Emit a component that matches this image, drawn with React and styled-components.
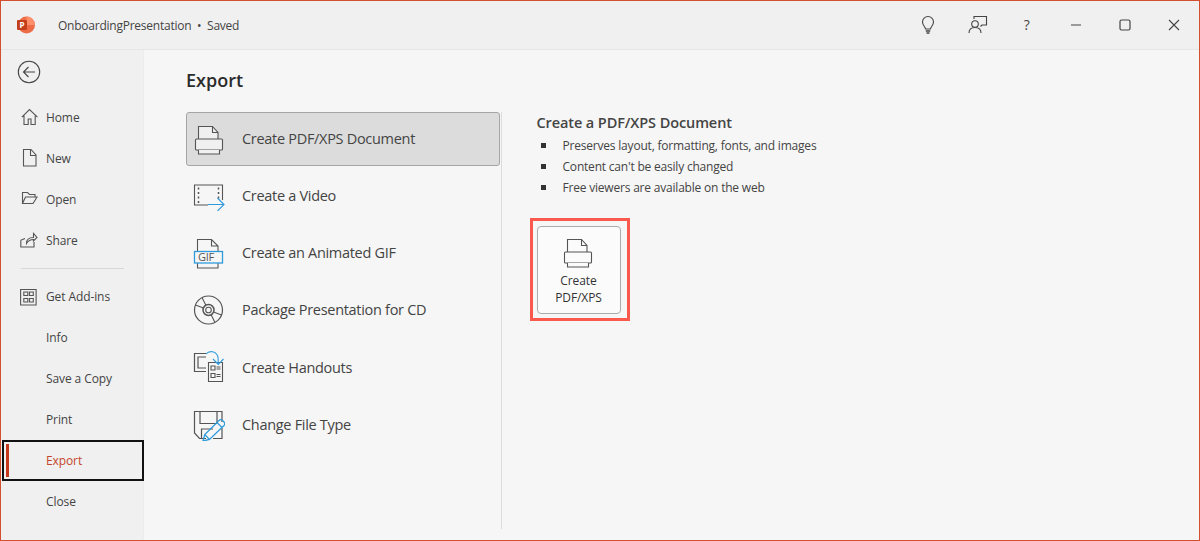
import React from "react";
import styled, { createGlobalStyle } from "styled-components";

const Global = createGlobalStyle`
  html, body { margin: 0; padding: 0; background: #f0f0f0; }
  * { box-sizing: border-box; }
`;
const Win = styled.div`
  width: 1200px; height: 541px; display: flex; flex-direction: column; overflow: hidden;
  border: 1px solid #d2502f; border-top-width: 1.5px;
  background: #f0f0f0; color: #444;
  font-family: "Open Sans", "Noto Sans", sans-serif;
`;
const TitleBar = styled.header`
  height: 48.5px; flex: none; display: flex; align-items: center; padding: 0 0 0 16px;
  border-bottom: 1px solid #e6e6e6;
`;
const AppLogo = styled.svg`width: 18px; height: 18px; flex: none;`;
const DocTitle = styled.div`
  margin-left: 23px; flex: 1; font-size: 12px; letter-spacing: -0.24px; color: #444; padding-top: 2px;
`;
const TitleIcons = styled.div`display: flex; align-items: center;`;
const TitleBtn = styled.div`
  width: 49.2px; height: 48px; display: flex; align-items: center; justify-content: center; color: #444;
  font-size: 14px;
`;
const Body = styled.div`flex: 1; display: flex; min-height: 0;`;
const Sidebar = styled.nav`
  width: 143px; flex: none; display: flex; flex-direction: column; border-right: 1px solid #ececec; padding-top: 9.5px;
`;
const Back = styled.div`
  height: 26px; margin-bottom: 11.5px; padding-left: 16px; display: flex; align-items: center;
`;
const NavItem = styled.div`
  position: relative; height: 41px; display: flex; align-items: center; padding-left: 44px;
  font-size: 12px; letter-spacing: -0.1px; color: ${p => (p.$active ? "#c4462a" : "#444")};
  margin-left: 1px;
  ${p => p.$active && `
    border: 2px solid #111; padding-left: 42px; width: 141.5px;
    &::before { content: ""; position: absolute; left: 2px; top: 2px; bottom: 2px; width: 2.5px; background: #c4381c; }
  `}
`;
const NavIcon = styled.svg`
  position: absolute; left: 18px; top: 50%; transform: translateY(-50%); width: 20px; height: 20px;
  fill: none; stroke: #555; stroke-width: 1.1;
`;
const Divider = styled.hr`
  border: 0; height: 1px; background: #d8d8d8; margin: 7px 18px 7.5px 20px; flex: none; width: 103px;
`;
const Main = styled.main`
  flex: 1; background: #f6f6f6; padding: 18px 0 11px 42px; display: flex; flex-direction: column; min-width: 0;
`;
const Heading = styled.h1`
  margin: 0 0 20px; font-size: 18px; line-height: 24px; font-weight: 600; color: #2b2b2b;
`;
const Columns = styled.div`flex: 1; display: flex; min-height: 0;`;
const List = styled.div`
  width: 315.5px; flex: none; border-right: 1px solid #dcdcdc; padding-right: 0.5px;
  display: flex; flex-direction: column;
`;
const ListItem = styled.div`
  height: ${p => (p.$selected ? "54.5px" : "57.4px")}; display: flex; align-items: center;
  margin-bottom: ${p => (p.$selected ? "0.5px" : "0")};
  padding-left: 56px; position: relative; width: 314px;
  font-size: 14.5px; letter-spacing: -0.3px; color: #444;
  ${p => p.$selected && `background: #dcdcdc; border: 1px solid #a6a6a6; border-radius: 3px; padding-left: 55px;`}
`;
const ListIcon = styled.svg`
  position: absolute; left: 7px; top: 50%; transform: translateY(-50%); width: 32px; height: 32px;
  fill: none; stroke: #555; stroke-width: 1.1;
`;
const Detail = styled.section`padding: 1px 0 0 35px; flex: 1;`;
const DetailTitle = styled.h2`
  margin: 0 0 2px; font-size: 14.5px; line-height: 20px; font-weight: 600; color: #444; letter-spacing: -0.1px;
`;
const Bullets = styled.ul`margin: 0 0 20px; padding: 0; list-style: none;`;
const Bullet = styled.li`
  height: 21px; display: flex; align-items: center; font-size: 12px; letter-spacing: -0.2px; color: #444;
  &::before { content: ""; width: 5px; height: 5px; background: #333; margin: 0 17px 0 4px; flex: none; }
`;
const Highlight = styled.div`
  display: inline-flex; margin-left: -7px; padding: 5px 6px 4px 4px; border: 3px solid #fa5a4e;
`;
const CreateBtn = styled.div`
  width: 84px; height: 88px; background: #fbfbfb; border: 1px solid #ababab; border-radius: 4px;
  display: flex; flex-direction: column; align-items: center; padding-top: 9px;
  font-size: 12px; line-height: 17px; letter-spacing: -0.1px; text-align: center; color: #333;
  svg { width: 32px; height: 32px; fill: none; stroke: #555; stroke-width: 1.1; margin-bottom: 4px; flex: none; }
`;

const Blue = "#2f9bdc";
const Printer = ({ fill }) => (
  <>
    <path d="M4.500 16V3.500h14l5.500 6V16" fill={fill} />
    <path d="M18.500 3.500v6H24" />
    <path d="M2.500 16h25a1 1 0 0 1 1 1v9a1 1 0 0 1-1 1h-25a1 1 0 0 1-1-1v-9a1 1 0 0 1 1-1z" fill={fill} />
    <path d="M4.500 27v4h21v-4" fill={fill} />
  </>
);
const navIcons = {
  home: <path d="M1.800 10.200 9.500 2.500l8 7.700M4 8.500v9h4.200V12h2.800v5.500h4.200v-9" />,
  new: <path d="M3.500 1.500H11l5 5.500v11H3.500zM10.500 1.500v6H16" />,
  open: <path d="M2.500 14.500v-11h5l2 2h5.500v2.500M2.500 14.500H13l4-6.500H5.500z" />,
  share: <path d="M.8 10.200V17H14v-5M.8 10.200 5 8.500M6.500 13.500c0-4 3-6 7-6V3.500l3.500 4-3.500 3.500V9.500c-3 0-5.500 1.500-7 4z" />,
  addins: <path d="M.6 2.500h15.500v15.500H.6zM3.800 5h4v3.500h-4zM9.500 5h3.800v3.500H9.500zM3.800 11.500h4V15h-4zM9.500 11.500h3.800V15H9.500z" />,
};
const nav = [
  ["Home", "home"], ["New", "new"], ["Open", "open"], ["Share", "share"], null,
  ["Get Add-ins", "addins"], ["Info"], ["Save a Copy"], ["Print"], ["Export", null, true], ["Close"],
];
const listIcons = [
  <Printer key="p" fill="#f0f0f0" />,
  <g key="v">
    <path d="M15 26H1.500V6h28v15" />
    <path d="M5.500 8.500v2M5.500 13v2M5.500 17.500v2M5.500 22v2M25.500 8.500v2M25.500 13v2M25.500 17.500v2" strokeWidth="1.500" />
    <path d="M15 25.500h16M24.500 19l6.500 6.500-6.500 6.500" stroke={Blue} />
  </g>,
  <g key="g">
    <path d="M4.500 14.500v-12h14L25 9v5.500M18.500 2.500V9H25M4.500 26v5h20.500v-5" />
    <rect x="1.500" y="14.500" width="28" height="11.500" stroke={Blue} strokeWidth="1.300" />
    <text x="5" y="24.200" fontSize="11" fontFamily="Open Sans" fill="#555" stroke="none">GIF</text>
  </g>,
  <g key="c">
    <circle cx="15.500" cy="16" r="14" strokeWidth="1.200" />
    <circle cx="15.500" cy="16" r="5.500" strokeWidth="1.500" />
    <circle cx="15.500" cy="16" r="2.800" />
    <path d="M2.500 11l8 3M9 3.500l4 8M28.500 21l-8-3M22 28.500l-4-8" />
  </g>,
  <g key="h">
    <path d="M13 20.500H1.500v-18h12M13 17H5V6h8" strokeWidth="1.200" />
    <path d="M15.500 11.500h14v19h-14z" />
    <path d="M18 15h4v4h-4zM18 22.500h4v4h-4zM23.500 16h4M23.500 18h4M23.500 23.500h4M23.500 25.500h4" />
    <path d="M13 3c3-3.500 10-3.500 12 3l.3 7M20 8l5.300 5.500L30.500 8" stroke={Blue} />
  </g>,
  <g key="f">
    <path d="M29 13V2.500H1.500V24l5 5.500H13M7 2.500v12h17v-12M8.500 29.500V20H20M29 19v10.500h-9" strokeWidth="1.200" />
    <path d="M10 32l1.800-6.500L26 11.500a2.500 2.500 0 0 1 3.500 0l1.500 1.500a2.500 2.500 0 0 1 0 3.500L16.500 30.500z" stroke={Blue} strokeWidth="1.300" />
    <path d="M11.800 25.500l4.700 5M24 13.500l5 5" stroke={Blue} />
  </g>,
];
const listLabels = ["Create PDF/XPS Document", "Create a Video", "Create an Animated GIF", "Package Presentation for CD", "Create Handouts", "Change File Type"];

export default function App() {
  return (
    <Win>
      <Global />
      <TitleBar>
        <AppLogo viewBox="0 0 18 18">
          <circle cx="9.500" cy="9" r="8.500" fill="#ed6c47" />
          <path d="M9.500.5a8.500 8.500 0 0 1 8.500 8.500H9.500z" fill="#ff8f6b" />
          <rect x="0" y="4" width="10" height="10" rx="1" fill="#c43e1c" />
          <text x="2.600" y="12" fontSize="8" fontWeight="700" fontFamily="Open Sans" fill="#fff">P</text>
        </AppLogo>
        <DocTitle>OnboardingPresentation&nbsp; •&nbsp; Saved</DocTitle>
        <TitleIcons>
          <TitleBtn>
            <svg width="18" height="20" viewBox="0 0 18 20" fill="none" stroke="#444" strokeWidth="1.100">
              <path d="M6.500 14c0-2-3-3.500-3-7a5.500 5.500 0 0 1 11 0c0 3.500-3 5-3 7z" />
              <path d="M6.800 16h4.400M7.500 18h3" strokeWidth="1.300" />
            </svg>
          </TitleBtn>
          <TitleBtn>
            <svg width="20" height="20" viewBox="0 0 20 20" fill="none" stroke="#444" strokeWidth="1.100">
              <path d="M6 4V1.500h12.500V10H14l-1.500 1.500" />
              <circle cx="7" cy="9" r="3.300" />
              <path d="M1 18c0-3.500 2.500-5.500 6-5.500s6 2 6 5.500" />
            </svg>
          </TitleBtn>
          <TitleBtn>?</TitleBtn>
          <TitleBtn>
            <svg width="12" height="12" viewBox="0 0 12 12" stroke="#555" strokeWidth="1.100"><path d="M1 6h10" /></svg>
          </TitleBtn>
          <TitleBtn>
            <svg width="12" height="12" viewBox="0 0 12 12" fill="none" stroke="#444" strokeWidth="1.200"><rect x="1" y="1" width="10" height="10" rx="1.500" /></svg>
          </TitleBtn>
          <TitleBtn>
            <svg width="12" height="12" viewBox="0 0 12 12" stroke="#444" strokeWidth="1.100"><path d="M1 1l10 10M11 1 1 11" /></svg>
          </TitleBtn>
        </TitleIcons>
      </TitleBar>
      <Body>
        <Sidebar>
          <Back>
            <svg width="24" height="24" viewBox="0 0 24 24" fill="none" stroke="#444" strokeWidth="1.100">
              <circle cx="12" cy="12" r="10.700" />
              <path d="M18 12H6.500M11.500 7l-5 5 5 5" />
            </svg>
          </Back>
          {nav.map((n, i) =>
            n ? (
              <NavItem key={i} $active={n[2]}>
                {n[1] && <NavIcon viewBox="0 0 20 20">{navIcons[n[1]]}</NavIcon>}
                {n[0]}
              </NavItem>
            ) : (
              <Divider key={i} />
            )
          )}
        </Sidebar>
        <Main>
          <Heading>Export</Heading>
          <Columns>
            <List>
              {listLabels.map((l, i) => (
                <ListItem key={l} $selected={i === 0}>
                  <ListIcon viewBox="0 0 32 32">{listIcons[i]}</ListIcon>
                  {l}
                </ListItem>
              ))}
            </List>
            <Detail>
              <DetailTitle>Create a PDF/XPS Document</DetailTitle>
              <Bullets>
                <Bullet>Preserves layout, formatting, fonts, and images</Bullet>
                <Bullet>Content can't be easily changed</Bullet>
                <Bullet>Free viewers are available on the web</Bullet>
              </Bullets>
              <Highlight>
                <CreateBtn>
                  <svg viewBox="0 0 32 32"><Printer fill="#fbfbfb" /></svg>
                  <span>Create<br />PDF/XPS</span>
                </CreateBtn>
              </Highlight>
            </Detail>
          </Columns>
        </Main>
      </Body>
    </Win>
  );
}
